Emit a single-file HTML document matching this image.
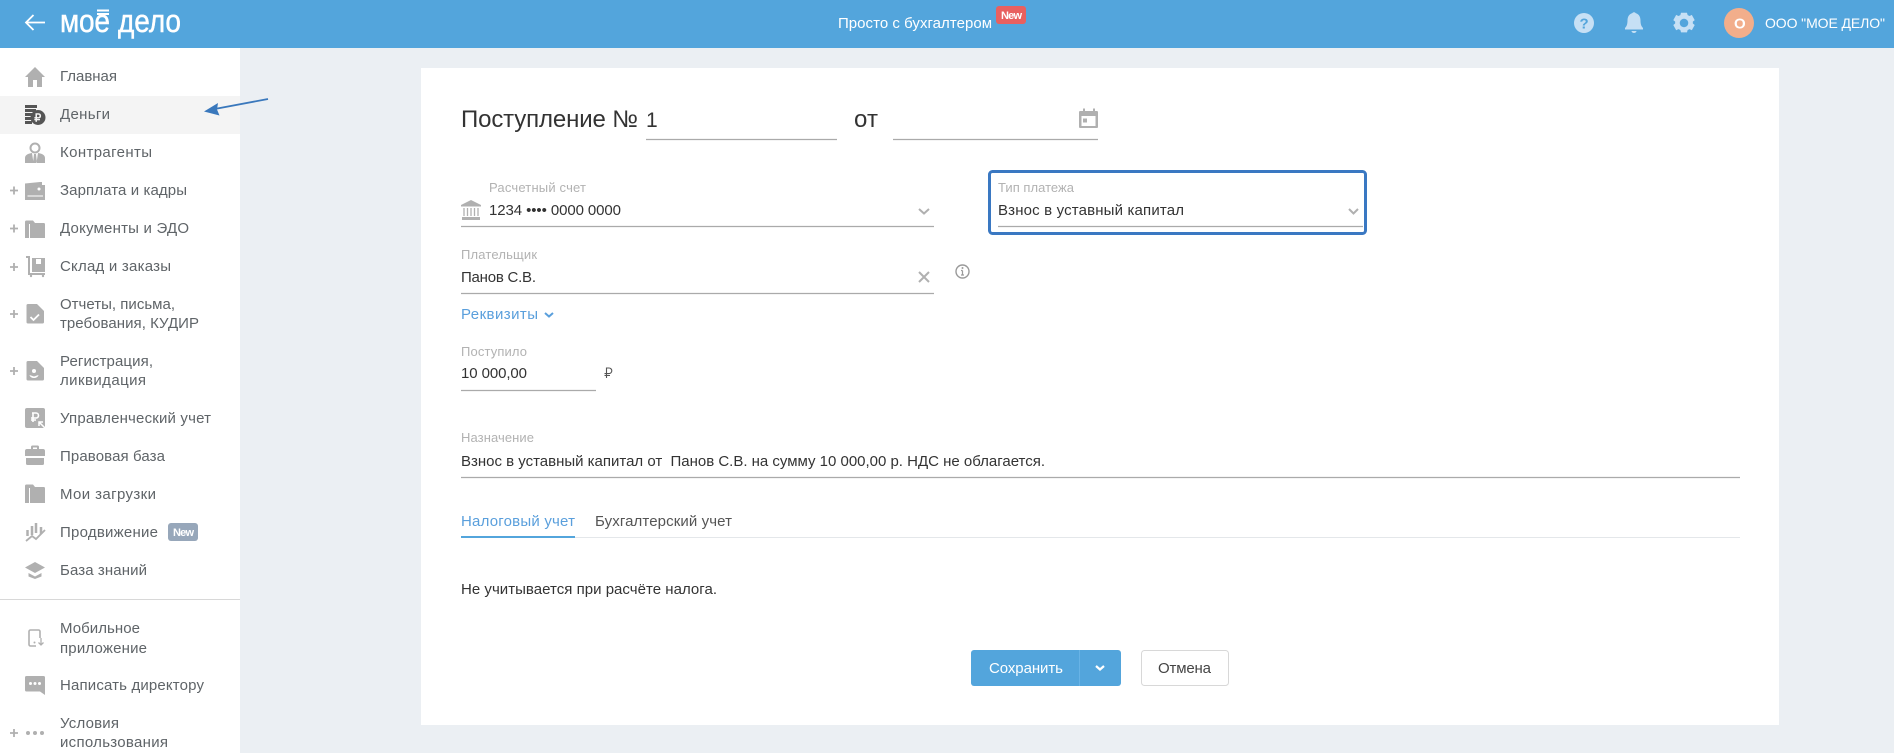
<!DOCTYPE html>
<html lang="ru"><head><meta charset="utf-8"><title>Поступление</title>
<style>
html,body{margin:0;padding:0;width:1894px;height:753px;overflow:hidden;background:#ebeff3}
svg{display:block;position:absolute;left:0;top:0}
text{font-family:"Liberation Sans",sans-serif;font-size:15px;fill:#333}
.n text{fill:#5f6468;font-size:15px}
.i{fill:#b0b0b0}
.l{font-size:13px;fill:#b2b2b2}
.u{stroke:#aaa;stroke-width:1.2;fill:none}
.c{fill:none;stroke:#b0b0b0;stroke-width:2}
</style></head><body>
<svg width="1894" height="753" viewBox="0 0 1894 753" xmlns="http://www.w3.org/2000/svg">
<!-- header -->
<rect width="1894" height="48" fill="#53a5dc"/>
<path d="M26 22.500H45M33.500 15L26 22.500L33.500 30" fill="none" stroke="#fff" stroke-width="1.800"/>
<g transform="translate(60,32) scale(1,1.17)">
<text x="0" y="0" style="font-size:28px;fill:#fff;stroke:#fff;stroke-width:.4" textLength="50" lengthAdjust="spacing">мое</text>
<text x="58" y="0" style="font-size:28px;fill:#fff;stroke:#fff;stroke-width:.4" textLength="63" lengthAdjust="spacing">дело</text>
</g>
<path d="M97 10.500H109M97 14H109" stroke="#fff" stroke-width="2"/>
<text x="838" y="28" style="fill:#fff;font-size:15px" textLength="154" lengthAdjust="spacing">Просто с бухгалтером</text>
<rect x="996" y="6" width="30" height="18" rx="3" fill="#e8605f"/>
<text x="1001" y="19" style="fill:#fff;font-size:11px;font-weight:bold" textLength="21" lengthAdjust="spacing">New</text>
<circle cx="1584" cy="23" r="10" fill="#c6e0f5"/>
<text x="1579.500" y="28.500" style="fill:#53a5dc;font-size:15px;font-weight:bold">?</text>
<path d="M1634 13c-4.500 0-6.500 3.500-6.500 7.500 0 4-1 6-2.500 7.500v1.500h18V28c-1.500-1.500-2.500-3.500-2.500-7.500 0-4-2-7.500-6.500-7.500zM1631.500 31h5a2.500 2 0 0 1-5 0z" fill="#c6e0f5"/><circle cx="1634" cy="14" r="1.800" fill="#c6e0f5"/>
<g transform="translate(1684,23) scale(.85) translate(-1684,-23)"><path d="M1680.500 11h7l.8 2.800 2.300 1 2.600-1.400 3.400 6.200-2.200 1.800v2.200l2.200 1.800-3.400 6.200-2.600-1.400-2.300 1-.8 2.800h-7l-.8-2.800-2.300-1-2.600 1.400-3.400-6.200 2.200-1.800v-2.200l-2.200-1.800 3.400-6.200 2.600 1.400 2.300-1zM1684 18a5 5 0 1 0 .01 0z" fill="#c6e0f5" fill-rule="evenodd"/></g>
<circle cx="1739" cy="23" r="15" fill="#f2ae8b"/>
<text x="1734" y="28.500" style="fill:#fff;font-size:15px;font-weight:bold" textLength="10">О</text>
<text x="1765" y="28" style="fill:#fff;font-size:14px" textLength="120" lengthAdjust="spacing">ООО "МОЕ ДЕЛО"</text>

<!-- sidebar -->
<rect y="48" width="240" height="705" fill="#fff"/>
<rect y="96" width="240" height="38" fill="#f4f4f4"/>
<rect y="599" width="240" height="1" fill="#d8d8d8"/>
<g class="n">
<text x="60" y="81" textLength="57" lengthAdjust="spacing">Главная</text>
<text x="60" y="119" textLength="50" lengthAdjust="spacing">Деньги</text>
<text x="60" y="157" textLength="92" lengthAdjust="spacing">Контрагенты</text>
<text x="60" y="195" textLength="127" lengthAdjust="spacing">Зарплата и кадры</text>
<text x="60" y="233" textLength="129" lengthAdjust="spacing">Документы и ЭДО</text>
<text x="60" y="271" textLength="111" lengthAdjust="spacing">Склад и заказы</text>
<text x="60" y="309" textLength="115" lengthAdjust="spacing">Отчеты, письма,</text>
<text x="60" y="328" textLength="139" lengthAdjust="spacing">требования, КУДИР</text>
<text x="60" y="366" textLength="93" lengthAdjust="spacing">Регистрация,</text>
<text x="60" y="385" textLength="86" lengthAdjust="spacing">ликвидация</text>
<text x="60" y="423" textLength="151" lengthAdjust="spacing">Управленческий учет</text>
<text x="60" y="461" textLength="105" lengthAdjust="spacing">Правовая база</text>
<text x="60" y="499" textLength="96" lengthAdjust="spacing">Мои загрузки</text>
<text x="60" y="537" textLength="98" lengthAdjust="spacing">Продвижение</text>
<text x="60" y="575" textLength="87" lengthAdjust="spacing">База знаний</text>
<text x="60" y="633" textLength="80" lengthAdjust="spacing">Мобильное</text>
<text x="60" y="653" textLength="87" lengthAdjust="spacing">приложение</text>
<text x="60" y="690" textLength="144" lengthAdjust="spacing">Написать директору</text>
<text x="60" y="728" textLength="59" lengthAdjust="spacing">Условия</text>
<text x="60" y="747" textLength="108" lengthAdjust="spacing">использования</text>
</g>
<rect x="168" y="523" width="30" height="18" rx="3" fill="#97a7ba"/>
<text x="173" y="536" style="fill:#fff;font-size:11px;font-weight:bold" textLength="21" lengthAdjust="spacing">New</text>

<!-- plus signs -->
<path d="M10 190.500h8M14 186.500v8M10 228.500h8M14 224.500v8M10 267h8M14 263v8M10 314h8M14 310v8M10 371h8M14 367v8M10 733h8M14 729v8" stroke="#b0b0b0" stroke-width="1.800"/>

<!-- nav icons -->
<path class="i" d="M35 67L25 77h3v10h5v-7h4v7h5V77h3z"/>
<g fill="#555"><rect x="25" y="105" width="12" height="3"/><rect x="25" y="109" width="11" height="3"/><rect x="25" y="113" width="7" height="3"/><rect x="25" y="117" width="6" height="3"/><rect x="25" y="121" width="7" height="3"/><circle cx="38" cy="117.500" r="7.500"/></g>
<text x="34.300" y="121.500" style="fill:#f4f4f4;font-size:11px;font-weight:bold">₽</text>
<g class="i"><circle cx="35" cy="148" r="4.500" fill="none" stroke="#b0b0b0" stroke-width="2"/><path d="M25 163v-5c0-3 3-4.500 7-5l1.500 10zM45 163v-5c0-3-3-4.500-7-5l-1.500 10zM34 154h2l1 9h-4z"/></g>
<path class="i" d="M25 183.500l15-1.500h2v3h3v15H25z"/><path d="M27.500 196H43" stroke="#fff" stroke-width="1"/><circle cx="39" cy="189" r="1.500" fill="#fff"/>
<path class="i" d="M25 222c0-1 .5-1.500 1.500-1.500H33l2 2.500h9c.5 0 1 .5 1 1.500V238H25z"/><rect x="29" y="224" width="1" height="14" fill="#fff"/>
<path class="i" d="M32 258h13v14H32zM36 259v5h5v-5z" fill-rule="evenodd"/><path d="M26 257h3v17h16" fill="none" stroke="#b0b0b0" stroke-width="2"/><circle cx="31" cy="276" r="1.200" fill="#b0b0b0"/><circle cx="43" cy="276" r="1.200" fill="#b0b0b0"/>
<path class="i" d="M28 304h9l7 7v11c0 1-.5 1.500-1.500 1.500H28c-1 0-1.500-.5-1.500-1.500v-16.500c0-1 .5-1.500 1.500-1.500z"/><path d="M30.500 317l3 3 5.500-5.500" stroke="#fff" stroke-width="1.800" fill="none"/>
<path class="i" d="M28 361h9l7 7v11c0 1-.5 1.500-1.500 1.500H28c-1 0-1.500-.5-1.500-1.500v-16.500c0-1 .5-1.500 1.500-1.500z"/><circle cx="34" cy="371" r="2" fill="#fff"/><path d="M29.500 375c1 4 8 4 9 0l-4.500 1.500z" fill="#fff"/>
<rect x="25" y="408" width="20" height="20" rx="2" fill="#b0b0b0"/><path d="M33 413v9M31 418h5a2.500 2.500 0 0 0 0-5h-4M31 420h5" stroke="#fff" stroke-width="1.600" fill="none"/><path d="M45 428l-6-6M39 426v-4h4" stroke="#fff" stroke-width="1.500" fill="none"/>
<path class="i" d="M25 451c0-1 .5-2 2-2h4v-2c0-1 .5-1.500 1.500-1.500h5c1 0 1.500.5 1.500 1.500v2h4c1.500 0 2 1 2 2v5H25zM33 447.500v1.500h4v-1.500zM26 458h18v5.500c0 1-.5 1.500-1.500 1.500h-15c-1 0-1.500-.5-1.500-1.500z" fill-rule="evenodd"/>
<path class="i" d="M25 486c0-1 .5-1.500 1.500-1.500H33l2 2.500h9c.5 0 1 .5 1 1.500V503H25z"/><rect x="29" y="488" width="1" height="15" fill="#fff"/>
<path d="M27.500 530v6M32 526v9M36 523v10M41 527v7" stroke="#b0b0b0" stroke-width="2.500"/><path d="M26 541l6-5 4 3 9-9" stroke="#b0b0b0" stroke-width="1.800" fill="none"/>
<path class="i" d="M35 562l10 5.500-10 5.500-10-5.500z"/><path class="i" d="M28.500 573l6.500 3.500 6.500-3.500v3.500L35 579l-6.500-2.500z"/>
<rect x="29" y="630" width="11" height="16" rx="1.500" fill="none" stroke="#b0b0b0" stroke-width="1.600"/><rect x="36" y="638" width="9" height="9" fill="#fff"/><path d="M41 638v7M38.500 642.500l2.500 2.500 2.500-2.500" stroke="#b0b0b0" stroke-width="1.300" fill="none"/><circle cx="34.500" cy="642.500" r="1" fill="#b0b0b0"/>
<path class="i" d="M26.500 676h17c1 0 1.500.5 1.500 1.500V695l-5-3.500H26.500c-1 0-1.500-.5-1.500-1.500v-12.500c0-1 .5-1.500 1.500-1.500z"/><circle cx="30.500" cy="683.500" r="1.500" fill="#fff"/><circle cx="35" cy="683.500" r="1.500" fill="#fff"/><circle cx="39.500" cy="683.500" r="1.500" fill="#fff"/>
<circle cx="28" cy="733" r="2" fill="#b0b0b0"/><circle cx="35" cy="733" r="2" fill="#b0b0b0"/><circle cx="42" cy="733" r="2" fill="#b0b0b0"/>

<!-- blue annotation arrow -->
<path d="M268 99L212 109.500" stroke="#3a78bc" stroke-width="1.800"/><path d="M204 111.500L218 103l-1 6.500 2.500 6z" fill="#3a78bc"/>

<!-- card -->
<rect x="421" y="68" width="1358" height="657" fill="#fff"/>
<text x="461" y="127" style="font-size:24px" textLength="177" lengthAdjust="spacing">Поступление №</text>
<text x="646" y="127" style="font-size:21px">1</text>
<path class="u" d="M646 139.500H837"/>
<text x="854" y="127" style="font-size:24px" textLength="24" lengthAdjust="spacing">от</text>
<path class="u" d="M893 139.500H1098"/>
<path class="i" d="M1080 111h3v-2.500h2v2.500h8v-2.500h2v2.500h2c.5 0 1 .5 1 1v15c0 .5-.5 1-1 1h-17c-.5 0-1-.5-1-1v-15c0-.5.500-1 1-1zM1081.500 116v10h14v-10z" fill-rule="evenodd"/><rect x="1083" y="118.500" width="4" height="4" fill="#b0b0b0"/>

<text class="l" x="489" y="192" textLength="97" lengthAdjust="spacing">Расчетный счет</text>
<text x="489" y="215" textLength="132" lengthAdjust="spacing">1234 •••• 0000 0000</text>
<path class="i" d="M461 205l10-5 10 5v1.500H461zM462 217h18v3h-18z"/><path d="M464 208v8M467.500 208v8M471 208v8M474.500 208v8M478 208v8" stroke="#b0b0b0" stroke-width="1.300"/>
<path class="u" d="M461 226.500H934"/>
<path class="c" d="M919 209l5 4.500 5-4.500"/>

<text class="l" x="461" y="259" textLength="76" lengthAdjust="spacing">Плательщик</text>
<text x="461" y="282" textLength="75" lengthAdjust="spacing">Панов С.В.</text>
<path d="M919 272l10 10M929 272l-10 10" stroke="#b0b0b0" stroke-width="2" fill="none"/>
<path class="u" d="M461 293.500H934"/>
<circle cx="962.500" cy="271.500" r="6.500" fill="none" stroke="#9a9a9a" stroke-width="1.400"/><path d="M962.500 270.500v4.500M961 270.500h1.500M961 275h3" stroke="#9a9a9a" stroke-width="1.200" fill="none"/><circle cx="962.500" cy="268" r="1" fill="#9a9a9a"/>

<text x="461" y="319" style="fill:#5a9fdc" textLength="77" lengthAdjust="spacing">Реквизиты</text>
<path d="M545 313l4 3.500 4-3.500" fill="none" stroke="#5a9fdc" stroke-width="2"/>

<text class="l" x="461" y="356" textLength="66" lengthAdjust="spacing">Поступило</text>
<text x="461" y="378" textLength="66" lengthAdjust="spacing">10 000,00</text>
<path class="u" d="M461 390.500H596"/>
<path d="M606.500 378v-10h2.500a2.800 2.800 0 0 1 0 5.600h-4.500M604.500 375.500h5.500" fill="none" stroke="#555" stroke-width="1.100"/>

<text class="l" x="461" y="442" textLength="73" lengthAdjust="spacing">Назначение</text>
<text x="461" y="466" textLength="584" lengthAdjust="spacing">Взнос в уставный капитал от &#160;Панов С.В. на сумму 10 000,00 р. НДС не облагается.</text>
<path class="u" d="M461 477.500H1740"/>

<rect x="461" y="537" width="1279" height="1" fill="#e4e7ea"/>
<rect x="461" y="536" width="114" height="2" fill="#53a5dc"/>
<text x="461" y="526" style="fill:#5a9fdc" textLength="114" lengthAdjust="spacing">Налоговый учет</text>
<text x="595" y="526" style="fill:#555" textLength="137" lengthAdjust="spacing">Бухгалтерский учет</text>
<text x="461" y="594" textLength="256" lengthAdjust="spacing">Не учитывается при расчёте налога.</text>

<!-- type box -->
<rect x="989.500" y="171.500" width="376" height="62" rx="3" fill="#fff" stroke="#3a78c2" stroke-width="3"/>
<text class="l" x="998" y="192" textLength="76" lengthAdjust="spacing">Тип платежа</text>
<text x="998" y="215" textLength="186" lengthAdjust="spacing">Взнос в уставный капитал</text>
<path class="u" d="M998 226.500H1363"/>
<path class="c" d="M1349 209l4.500 4.500 4.500-4.500"/>

<!-- buttons -->
<rect x="971" y="650" width="150" height="36" rx="3" fill="#53a5dc"/>
<rect x="1079" y="650" width="1" height="36" fill="#68b3e6"/>
<text x="989" y="673" style="fill:#fff" textLength="74" lengthAdjust="spacing">Сохранить</text>
<path d="M1096 666l4 3.500 4-3.500" fill="none" stroke="#fff" stroke-width="2.200"/>
<rect x="1141.500" y="650.500" width="87" height="35" rx="3" fill="#fff" stroke="#d8d8d8"/>
<text x="1158" y="673" style="fill:#444" textLength="53" lengthAdjust="spacing">Отмена</text>
</svg>
</body></html>
